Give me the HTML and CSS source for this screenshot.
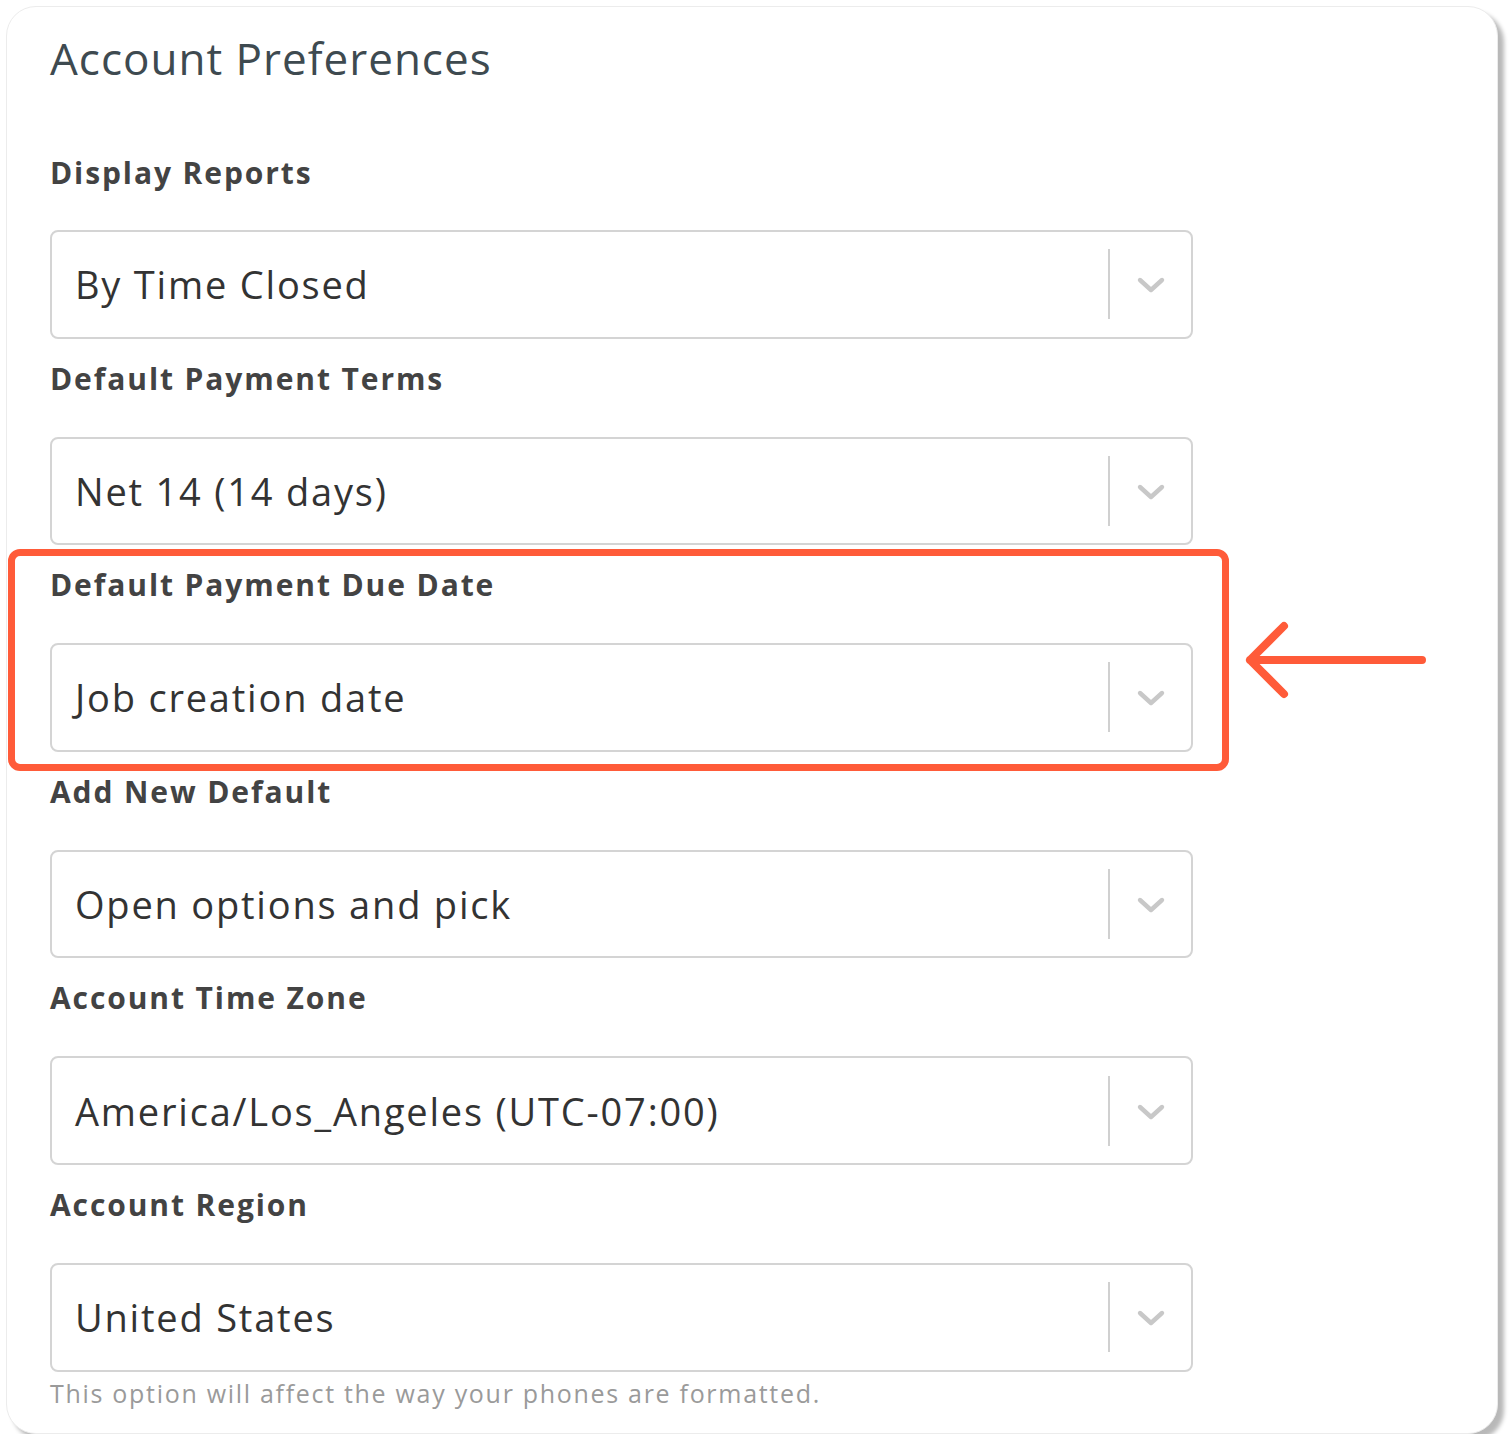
FILE: index.html
```html
<!DOCTYPE html>
<html>
<head>
<meta charset="utf-8">
<link rel="stylesheet" href="styles.css">
</head>
<body>
<div class="card">
  <h1 class="title">Account Preferences</h1>
  <div class="fields">
    <div class="field">
      <div class="label">Display Reports</div>
      <div class="select"><span class="value">By Time Closed</span><span class="sep"></span><svg class="chev" viewBox="0 0 30 18"><path d="M4 4 L15 14 L26 4"/></svg></div>
    </div>
    <div class="field">
      <div class="label">Default Payment Terms</div>
      <div class="select"><span class="value">Net 14 (14 days)</span><span class="sep"></span><svg class="chev" viewBox="0 0 30 18"><path d="M4 4 L15 14 L26 4"/></svg></div>
    </div>
    <div class="field highlighted">
      <div class="highlight-box"></div>
      <svg class="arrow" viewBox="0 0 184 80"><path d="M40 6 L6 40 L40 74 M6 40 L178 40"/></svg>
      <div class="label">Default Payment Due Date</div>
      <div class="select"><span class="value">Job creation date</span><span class="sep"></span><svg class="chev" viewBox="0 0 30 18"><path d="M4 4 L15 14 L26 4"/></svg></div>
    </div>
    <div class="field">
      <div class="label">Add New Default</div>
      <div class="select"><span class="value">Open options and pick</span><span class="sep"></span><svg class="chev" viewBox="0 0 30 18"><path d="M4 4 L15 14 L26 4"/></svg></div>
    </div>
    <div class="field">
      <div class="label">Account Time Zone</div>
      <div class="select"><span class="value">America/Los_Angeles (UTC-07:00)</span><span class="sep"></span><svg class="chev" viewBox="0 0 30 18"><path d="M4 4 L15 14 L26 4"/></svg></div>
    </div>
    <div class="field">
      <div class="label">Account Region</div>
      <div class="select"><span class="value">United States</span><span class="sep"></span><svg class="chev" viewBox="0 0 30 18"><path d="M4 4 L15 14 L26 4"/></svg></div>
    </div>
  </div>
  <p class="help">This option will affect the way your phones are formatted.</p>
</div>
</body>
</html>
```
FILE: styles.css
```css
* { box-sizing: border-box; }
html, body { margin: 0; padding: 0; background: #ffffff; }
body { font-family: "Open Sans", "Liberation Sans", sans-serif; }
.card {
  margin: 6px 0 0 6px;
  width: 1492px;
  height: 1428px;
  background: #fff;
  border: 1px solid #ececec;
  border-radius: 30px;
  box-shadow: 6px 6px 4px rgba(0,0,0,0.28);
  padding: 0 0 0 43px;
}
.title {
  margin: 0;
  padding-top: 23px;
  font-family: "Open Sans", sans-serif;
  font-weight: 400;
  font-size: 44px;
  line-height: 56px;
  color: #3e4a50;
  letter-spacing: 1px;
}
.fields { margin-top: 67px; }
.field { position: relative; width: 1143px; }
.label {
  font-family: "Open Sans", sans-serif;
  font-weight: 700;
  font-size: 30px;
  line-height: 40px;
  color: #434343;
  height: 98px;
  padding-top: 20px;
  letter-spacing: 1.9px;
}
.field:first-child .label { height: 77px; padding-top: 0; }
.select {
  height: 108.6px;
  border: 2px solid #d4d4d4;
  border-radius: 8px;
  display: flex;
  align-items: center;
  padding-left: 23px;
}
.value {
  flex: 1;
  font-size: 38px;
  color: #333;
  letter-spacing: 1.8px;
}
.sep {
  width: 2px;
  height: 70px;
  background: #d0d0d0;
}
.chev {
  width: 30px;
  height: 18px;
  margin: 2px 25px 0 26px;
  fill: none;
  stroke: #c8c8c8;
  stroke-width: 4.4;
  stroke-linecap: round;
  stroke-linejoin: round;
}
.highlight-box {
  position: absolute;
  left: -42px;
  top: 4px;
  width: 1221px;
  height: 222px;
  border: 7px solid #ff5b39;
  border-radius: 12px;
  pointer-events: none;
}
.arrow {
  position: absolute;
  left: 1194px;
  top: 75px;
  width: 184px;
  height: 80px;
  fill: none;
  stroke: #ff5b39;
  stroke-width: 8;
  stroke-linecap: round;
  stroke-linejoin: round;
}
.help {
  margin: 4px 0 0 0;
  font-size: 25px;
  color: #9a9a9a;
  letter-spacing: 1.7px;
}
```
